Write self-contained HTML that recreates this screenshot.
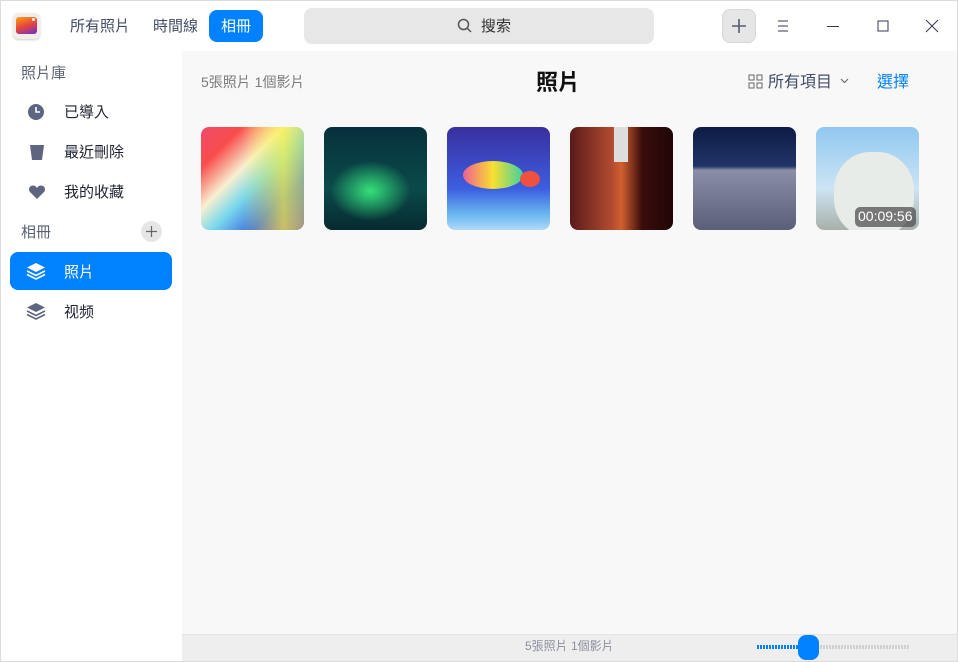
<!DOCTYPE html>
<html><head><meta charset="utf-8"><style>
*{box-sizing:border-box;margin:0;padding:0}
body{width:958px;height:662px;overflow:hidden;font-family:"Liberation Sans","Noto Sans CJK TC",sans-serif;background:#fff;position:relative}
.win{position:absolute;left:0;top:0;width:958px;height:662px;background:#fff}
.frame{position:absolute;left:0;top:0;width:958px;height:662px;border:1px solid #dcdcdc}
.top{position:absolute;left:0;top:0;width:958px;height:51px;background:#fff}
.side{position:absolute;left:1px;top:51px;width:181px;height:610px;background:#fff}
.main{position:absolute;left:182px;top:51px;width:775px;height:583px;background:#f8f8f8}
.foot{position:absolute;left:182px;top:634px;width:775px;height:27px;background:#eeeeee;border-top:1px solid #e4e4e4}
.t{position:absolute;white-space:nowrap;line-height:1.15}
.thumb{position:absolute;top:127px;width:103px;height:103px;border-radius:8px;overflow:hidden}
.si{position:absolute;left:28px}
</style></head><body><div class="win">
<div class="top">
 <div style="position:absolute;left:13px;top:13px;width:27px;height:26px;border-radius:5px;background:#f2ede8;box-shadow:0 1px 2px rgba(0,0,0,.2)"><div style="position:absolute;left:3px;top:4px;width:21px;height:17px;border-radius:3px;background:linear-gradient(160deg,#f7a21b,#e8443a 50%,#6a2fd0)"></div><div style="position:absolute;left:19px;top:5px;width:3px;height:3px;border-radius:50%;background:#fff"></div></div>
 <div class="t" style="left:70px;top:18px;font-size:15px;color:#414d68">所有照片</div>
 <div class="t" style="left:153px;top:18px;font-size:15px;color:#414d68">時間線</div>
 <div style="position:absolute;left:209px;top:10px;width:54px;height:32px;border-radius:8px;background:#0081ff"></div>
 <div class="t" style="left:221px;top:18px;font-size:15px;color:#fff">相冊</div>
 <div style="position:absolute;left:304px;top:8px;width:350px;height:36px;border-radius:8px;background:#e7e7e7"></div>
 <svg style="position:absolute;left:457px;top:18px" width="16" height="16"><circle cx="6.5" cy="6.5" r="5" fill="none" stroke="#555" stroke-width="1.5"/><line x1="10" y1="10" x2="14" y2="14" stroke="#555" stroke-width="1.5"/></svg>
 <div class="t" style="left:481px;top:18px;font-size:15px;color:#333">搜索</div>
 <div style="position:absolute;left:722px;top:9px;width:34px;height:34px;border-radius:8px;background:#e6e6e6;border:1px solid #d6d6d6"></div>
 <svg style="position:absolute;left:731px;top:18px" width="16" height="16"><path d="M8 1V15M1 8H15" stroke="#555d70" stroke-width="1.6"/></svg>
 <svg style="position:absolute;left:776px;top:19px" width="14" height="14"><path d="M2 2H12M2 7H12M2 12H12" stroke="#333a50" stroke-width="1"/></svg>
 <svg style="position:absolute;left:826px;top:19px" width="14" height="14"><path d="M1 7.5H13" stroke="#333a50" stroke-width="1"/></svg>
 <svg style="position:absolute;left:876px;top:19px" width="14" height="14"><rect x="2" y="2" width="10" height="10" fill="none" stroke="#333a50" stroke-width="1"/></svg>
 <svg style="position:absolute;left:925px;top:19px" width="14" height="14"><path d="M1 1L13 13M13 1L1 13" stroke="#333a50" stroke-width="1"/></svg>
</div>
<div class="side">
 <div class="t" style="left:20px;top:14px;font-size:15px;color:#5a6275">照片庫</div>
 <svg class="si" style="top:52px;left:26px" width="18" height="18"><circle cx="9" cy="9" r="8" fill="#5d6580"/><path d="M9 4V9H13" stroke="#fff" stroke-width="1.6" fill="none"/></svg>
 <div class="t" style="left:63px;top:53px;font-size:15px;color:#1e2433">已導入</div>
 <svg class="si" style="top:92px" width="16" height="18"><path d="M1 2H15L13 17H3Z" fill="#5d6580"/></svg>
 <div class="t" style="left:63px;top:93px;font-size:15px;color:#1e2433">最近刪除</div>
 <svg class="si" style="top:133px;left:27px" width="18" height="16"><path d="M9 15L2 8C0 6 1 1.5 5 1.5C7 1.5 8.5 3 9 4C9.5 3 11 1.5 13 1.5C17 1.5 18 6 16 8Z" fill="#5d6580"/></svg>
 <div class="t" style="left:63px;top:133px;font-size:15px;color:#1e2433">我的收藏</div>
 <div class="t" style="left:20px;top:173px;font-size:15px;color:#5a6275">相冊</div>
 <div style="position:absolute;left:140px;top:170px;width:21px;height:21px;border-radius:50%;background:#e6e6e6"></div>
 <svg style="position:absolute;left:145px;top:175px" width="11" height="11"><path d="M5.5 0V11M0 5.5H11" stroke="#666" stroke-width="1.2"/></svg>
 <div style="position:absolute;left:9px;top:201px;width:162px;height:38px;border-radius:8px;background:#0081ff"></div>
 <svg class="si" style="top:211px;left:25px" width="20" height="18"><path d="M10 1L19 5.5L10 10L1 5.5Z" fill="#fff"/><path d="M1 9L10 13.5L19 9M1 12.5L10 17L19 12.5" fill="none" stroke="#fff" stroke-width="1.6"/></svg>
 <div class="t" style="left:63px;top:213px;font-size:15px;color:#fff">照片</div>
 <svg class="si" style="top:251px;left:25px" width="20" height="18"><path d="M10 1L19 5.5L10 10L1 5.5Z" fill="#5d6580"/><path d="M1 9L10 13.5L19 9M1 12.5L10 17L19 12.5" fill="none" stroke="#5d6580" stroke-width="1.6"/></svg>
 <div class="t" style="left:63px;top:253px;font-size:15px;color:#1e2433">视频</div>
</div>
<div class="main">
 <div class="t" style="left:19px;top:23px;font-size:14px;color:#7a7a7a">5張照片 1個影片</div>
 <div class="t" style="left:354px;top:19px;font-size:22px;font-weight:bold;color:#111">照片</div>
 <svg style="position:absolute;left:566px;top:23px" width="15" height="15"><rect x="1" y="1" width="5" height="5" fill="none" stroke="#666" stroke-width="1"/><rect x="9" y="1" width="5" height="5" fill="none" stroke="#666"/><rect x="1" y="9" width="5" height="5" fill="none" stroke="#666"/><rect x="9" y="9" width="5" height="5" fill="none" stroke="#666"/></svg>
 <div class="t" style="left:586px;top:23px;font-size:16px;color:#414d68">所有項目</div>
 <svg style="position:absolute;left:658px;top:27px" width="9" height="6"><path d="M1 1L4.5 4.5L8 1" fill="none" stroke="#666" stroke-width="1.1"/></svg>
 <div class="t" style="left:695px;top:23px;font-size:16px;color:#0081ff">選擇</div>
</div>
<div class="thumb" style="left:201px;background:linear-gradient(135deg,#f04a6a 0%,#f94d4d 20%,#f8f0d0 40%,#7ad8ec 55%,#3c6ee0 75%,#6a2fb8 100%)"><div style="position:absolute;inset:0;background:linear-gradient(90deg,transparent 40%,rgba(250,240,60,.7) 80%,rgba(200,220,100,.6))"></div></div>
<div class="thumb" style="left:324px;background:radial-gradient(ellipse 40px 30px at 45% 62%,#35e07a,transparent),linear-gradient(180deg,#07303c,#0a4a4a 60%,#072a30)"></div>
<div class="thumb" style="left:447px;background:linear-gradient(180deg,#3a2f9e 0%,#3c5ee0 60%,#6ab8f0 85%,#b0d8f8)"><div style="position:absolute;left:16px;top:34px;width:60px;height:28px;border-radius:50%;background:linear-gradient(90deg,#f06090,#f8e030 50%,#40d0a0)"></div><div style="position:absolute;left:73px;top:44px;width:20px;height:16px;border-radius:50%;background:#f05040"></div></div>
<div class="thumb" style="left:570px;background:linear-gradient(90deg,#5a1a1a,#b04a30 40%,#d06030 50%,#3a0c0c 70%,#200606)"><div style="position:absolute;left:44px;top:0;width:14px;height:35px;background:#ddd"></div></div>
<div class="thumb" style="left:693px;background:linear-gradient(180deg,#0e1c44 0%,#1f3468 38%,#8a8ea8 42%,#5a5e78 100%)"></div>
<div class="thumb" style="left:816px;background:linear-gradient(180deg,#90c8f0,#cde4f4 60%,#a8b0a8)"><div style="position:absolute;left:18px;top:25px;width:80px;height:85px;border-radius:45%;background:#e8ece8"></div><div style="position:absolute;left:39px;top:80px;width:61px;height:20px;border-radius:5px;background:rgba(80,80,80,.75)"></div><div class="t" style="left:42px;top:81px;font-size:14px;color:#fff">00:09:56</div></div>
<div class="foot">
 <div class="t" style="left:343px;top:5px;font-size:12px;color:#8a8f9c">5張照片 1個影片</div>
 <div style="position:absolute;left:575px;top:10px;width:50px;height:4px;background:repeating-linear-gradient(90deg,#0081ff 0 2px,transparent 2px 3px)"></div>
 <div style="position:absolute;left:635px;top:10px;width:92px;height:4px;background:repeating-linear-gradient(90deg,#d0d0d0 0 2px,transparent 2px 3px)"></div>
 <div style="position:absolute;left:616px;top:0;width:21px;height:25px;border-radius:8px;background:#0081ff"></div>
</div>
<div class="frame"></div>
</div></body></html>
